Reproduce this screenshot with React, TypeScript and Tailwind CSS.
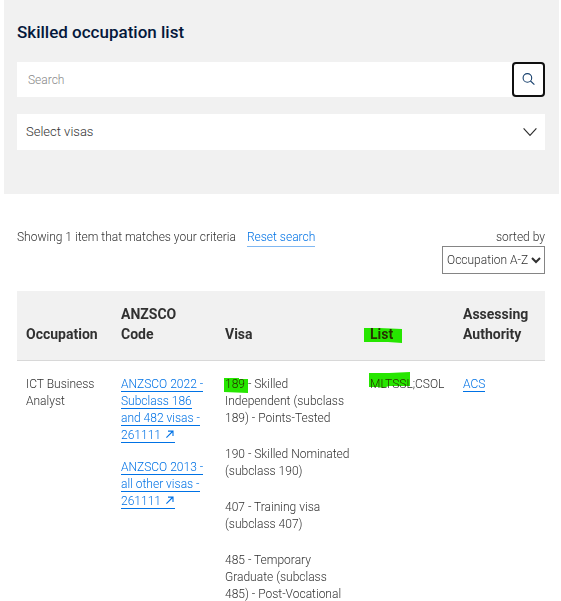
import type { ReactNode } from "react";

interface HighlightProps {
  points: string;
  viewBox: string;
  className: string;
  children: ReactNode;
}

const anzscoLinks = [
  "ANZSCO 2022 - Subclass 186 and 482 visas - 261111",
  "ANZSCO 2013 - all other visas - 261111",
];

const visas = [
  "190 - Skilled Nominated (subclass 190)",
  "407 - Training visa (subclass 407)",
  "485 - Temporary Graduate (subclass 485) - Post-Vocational",
];

function SearchIcon() {
  return (
    <svg
      viewBox="0 0 13 13"
      className="h-[13px] w-[13px]"
      fill="none"
      stroke="#17406d"
      strokeWidth="1.1"
      aria-hidden="true"
    >
      <circle cx="5.4" cy="4.9" r="4.3" />
      <path d="M8.5 8 12.4 11.7" />
    </svg>
  );
}

function ChevronIcon() {
  return (
    <svg
      viewBox="0 0 14 9"
      className="pointer-events-none absolute top-1/2 right-2 h-[9px] w-[14px] -translate-y-1/2"
      fill="none"
      stroke="#313131"
      strokeWidth="1.2"
      aria-hidden="true"
    >
      <path d="M.6 .8 7 7.8 13.4 .8" />
    </svg>
  );
}

function ExternalIcon() {
  return (
    <svg
      viewBox="0 0 9 9"
      className="mr-px ml-1 inline-block h-[9px] w-[9px] align-baseline"
      fill="none"
      stroke="#0072e5"
      strokeWidth="1.1"
      aria-hidden="true"
    >
      <path d="M1.4 7.6 8 1M3 1.1h5V6" />
    </svg>
  );
}

// Marker pen stroke laid over a piece of text
function Highlight({ points, viewBox, className, children }: HighlightProps) {
  return (
    <div className="relative">
      {children}
      <svg
        viewBox={viewBox}
        className={`pointer-events-none absolute mix-blend-darken ${className}`}
        fill="#26e600"
        aria-hidden="true"
      >
        <polygon points={points} />
      </svg>
    </div>
  );
}

export default function App() {
  return (
    <main className="pr-[2px] pl-1 font-['Roboto',sans-serif] text-xs font-light text-[#313131]">
      <form
        className="bg-[#f1f1f1] pt-5 pr-[14px] pb-11 pl-[13px]"
        onSubmit={(event) => event.preventDefault()}
      >
        <h1 className="mb-[18px] text-[17px] leading-6 font-medium text-[#04183b]">
          Skilled occupation list
        </h1>
        <div className="mb-[17px] flex h-[35px]">
          <input
            type="search"
            aria-label="Search"
            placeholder="Search"
            className="min-w-0 flex-1 bg-white px-[11px] outline-none placeholder:text-[#888]"
          />
          <button
            type="submit"
            aria-label="Search"
            className="flex w-[33px] items-center justify-center rounded border-2 border-[#101010] bg-white"
          >
            <SearchIcon />
          </button>
        </div>
        <div className="relative h-9">
          <select
            aria-label="Select visas"
            className="h-full w-full appearance-none bg-white px-[9px] text-[13px] outline-none"
          >
            <option>Select visas</option>
          </select>
          <ChevronIcon />
        </div>
      </form>

      <section className="pt-[34px] pr-[14px] pl-[13px]">
        <div className="mb-[17px] flex items-start justify-between">
          <p className="leading-[18px]">
            Showing 1 item that matches your criteria
            <a
              href="#reset"
              className="ml-[11px] inline-block border-b border-[#80b8f2] text-[#0072e5]"
            >
              Reset search
            </a>
          </p>
          <div className="flex flex-col items-end">
            <label htmlFor="sort" className="leading-[18px]">
              sorted by
            </label>
            <select
              id="sort"
              className="h-7 w-[103px] border border-[#858585] bg-white"
            >
              <option>Occupation A-Z</option>
            </select>
          </div>
        </div>

        <table className="w-full table-fixed text-left">
          <colgroup>
            <col className="w-[95px]" />
            <col className="w-[104px]" />
            <col className="w-[145px]" />
            <col className="w-[93px]" />
            <col className="w-[91px]" />
          </colgroup>
          <thead>
            <tr className="border-b border-[#d8d8d8] bg-[#f1f1f1] align-bottom text-sm leading-5">
              <th className="px-[9px] pt-[13px] pb-4 font-bold">Occupation</th>
              <th className="px-[9px] pt-[13px] pb-4 font-bold">
                ANZSCO Code
              </th>
              <th className="px-[9px] pt-[13px] pb-4 font-bold">Visa</th>
              <th className="px-[9px] pt-[13px] pb-4 font-bold">
                <Highlight
                  viewBox="0 0 38 15"
                  points="0,0 15,0 38,1 38,15 24,14 0,14"
                  className="top-1 -left-[6px] h-[15px] w-[38px]"
                >
                  List
                </Highlight>
              </th>
              <th className="px-[9px] pt-[13px] pb-4 font-bold">
                Assessing Authority
              </th>
            </tr>
          </thead>
          <tbody>
            <tr className="align-top leading-[17px]">
              <td className="px-[9px] pt-[15px]">ICT Business Analyst</td>
              <td className="px-[9px] pt-[15px]">
                {anzscoLinks.map((link) => (
                  <p key={link} className="mb-[15px]">
                    <a
                      href="#anzsco"
                      className="border-b border-[#0072e5] text-[#0072e5]"
                    >
                      {link}
                      <ExternalIcon />
                    </a>
                  </p>
                ))}
              </td>
              <td className="px-[9px] pt-[15px]">
                <Highlight
                  viewBox="0 0 24 15"
                  points="0,0 15,0 15,1 24,1 24,15 0,14"
                  className="top-[2px] -left-px h-[15px] w-6"
                >
                  189 - Skilled Independent (subclass 189) - Points-Tested
                </Highlight>
                {visas.map((visa) => (
                  <p key={visa} className="mt-[19px]">
                    {visa}
                  </p>
                ))}
              </td>
              <td className="pt-[15px] pl-[9px]">
                <Highlight
                  viewBox="0 0 41 16"
                  points="0,1 20,1 41,0 41,14 20,14 14,16 9,15 0,15"
                  className="-top-1 -left-px h-4 w-[41px]"
                >
                  MLTSSL;CSOL
                </Highlight>
              </td>
              <td className="px-[9px] pt-[15px]">
                <a
                  href="#acs"
                  className="border-b border-[#0072e5] text-[#0072e5]"
                >
                  ACS
                </a>
              </td>
            </tr>
          </tbody>
        </table>
      </section>
    </main>
  );
}
